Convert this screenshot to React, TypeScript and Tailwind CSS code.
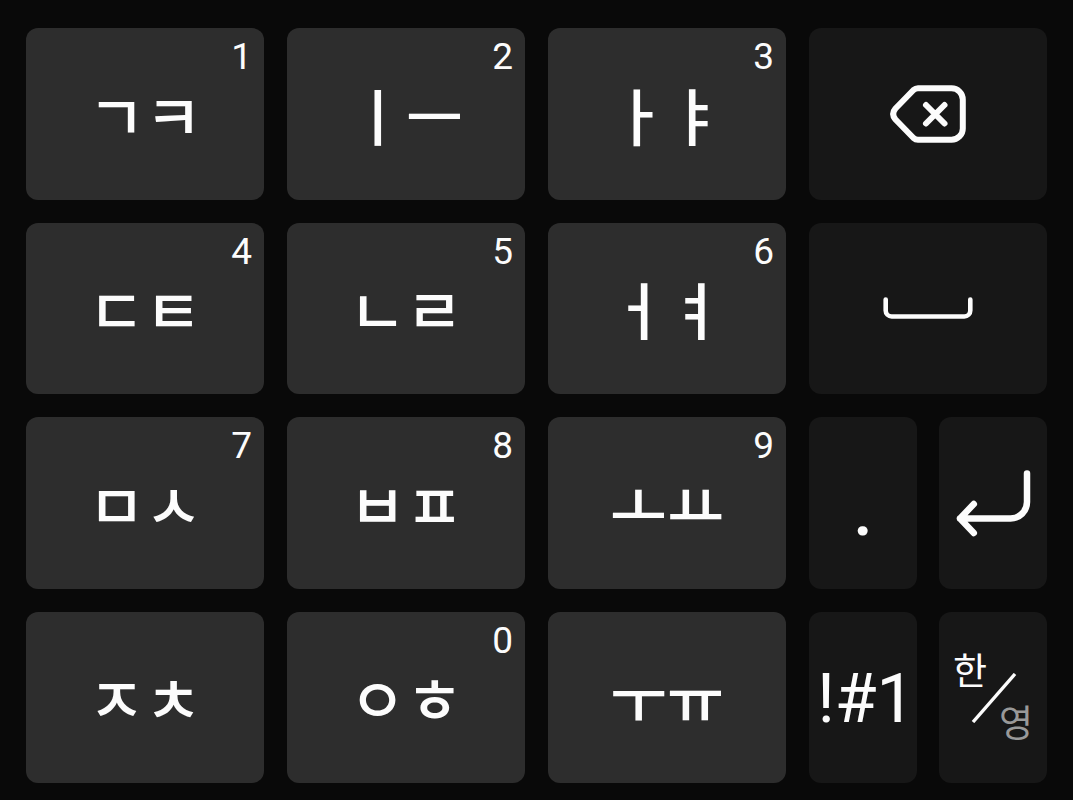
import type { ReactNode } from "react";

function Key({ digit, label, dark = false, children }: { digit?: string; label: string; dark?: boolean; children: ReactNode }) {
  return (
    <button
      type="button"
      aria-label={label}
      className={`relative flex min-w-0 flex-1 items-center justify-center rounded-xl text-[#fcfcfc] ${dark ? "bg-[#171717]" : "bg-[#2d2d2d]"}`}
    >
      {digit && <span className="absolute top-2 right-3 text-[37px] leading-[42px]">{digit}</span>}
      {children}
    </button>
  );
}

function Jamo({ text, digit }: { text: string; digit?: string }) {
  return (
    <Key label={text} digit={digit}>
      <span className="font-['Noto_Sans_CJK_KR',sans-serif] text-[62px] font-medium leading-none whitespace-nowrap">{text}</span>
    </Key>
  );
}

function Row({ children }: { children: ReactNode }) {
  return <div className="grid grid-cols-4 gap-[23px] *:flex">{children}</div>;
}

export default function App() {
  return (
    <main className="grid min-h-screen grid-rows-4 gap-[23px] bg-[#090909] px-[26px] pt-7 pb-[17px] font-[Roboto,'Noto_Sans_CJK_KR',sans-serif]">
      <Row>
        <Jamo text="ㄱㅋ" digit="1" />
        <Jamo text="ㅣㅡ" digit="2" />
        <Jamo text="ㅏㅑ" digit="3" />
        <Key dark label="Backspace">
          <svg viewBox="0 0 76 58" className="w-[76px]" fill="none" stroke="currentColor" strokeWidth="6" strokeLinecap="round" strokeLinejoin="round">
            <path d="M28 3.2H61.5A11.3 11.3 0 0 1 72.8 14.5V43.5A11.3 11.3 0 0 1 61.5 54.8H28Q25.5 54.8 23.5 53L5.5 34.5Q0.8 29 5.5 23.5L23.5 5Q25.5 3.2 28 3.2Z" />
            <path d="M36 20L54.5 38.5M54.5 20L36 38.5" />
          </svg>
        </Key>
      </Row>
      <Row>
        <Jamo text="ㄷㅌ" digit="4" />
        <Jamo text="ㄴㄹ" digit="5" />
        <Jamo text="ㅓㅕ" digit="6" />
        <Key dark label="Space">
          <svg viewBox="0 0 90 22" className="w-[90px]" fill="none" stroke="currentColor" strokeWidth="4.6" strokeLinecap="round">
            <path d="M2.7 2.5V13.5A6 6 0 0 0 8.7 19.5H81.3A6 6 0 0 0 87.3 13.5V2.5" />
          </svg>
        </Key>
      </Row>
      <Row>
        <Jamo text="ㅁㅅ" digit="7" />
        <Jamo text="ㅂㅍ" digit="8" />
        <Jamo text="ㅗㅛ" digit="9" />
        <div className="gap-[22px]">
          <Key dark label="Period">
            <span className="pt-4 text-[72px] font-medium leading-none">.</span>
          </Key>
          <Key dark label="Enter">
            <svg viewBox="0 0 76 68" className="w-[76px]" fill="none" stroke="currentColor" strokeWidth="6.5" strokeLinecap="round" strokeLinejoin="round">
              <path d="M72 4.5V33A16.5 16.5 0 0 1 55.5 49.5H5M18.8 35L5 49.5L18.8 64" />
            </svg>
          </Key>
        </div>
      </Row>
      <Row>
        <Jamo text="ㅈㅊ" />
        <Jamo text="ㅇㅎ" digit="0" />
        <Jamo text="ㅜㅠ" />
        <div className="gap-[22px]">
          <Key dark label="Symbols">
            <span className="pt-1 pl-1.5 text-[68px] leading-none">!#1</span>
          </Key>
          <Key dark label="한/영">
            <span className="relative flex h-[96px] w-20 flex-col justify-between pt-1 text-[37px] leading-10">
              <span className="self-start">한</span>
              <svg viewBox="0 0 46 50" className="absolute top-6 left-[18px] w-[46px]" fill="none" stroke="currentColor" strokeWidth="3.4">
                <path d="M2 49L44 1" />
              </svg>
              <span className="self-end text-[#999999]">영</span>
            </span>
          </Key>
        </div>
      </Row>
    </main>
  );
}
